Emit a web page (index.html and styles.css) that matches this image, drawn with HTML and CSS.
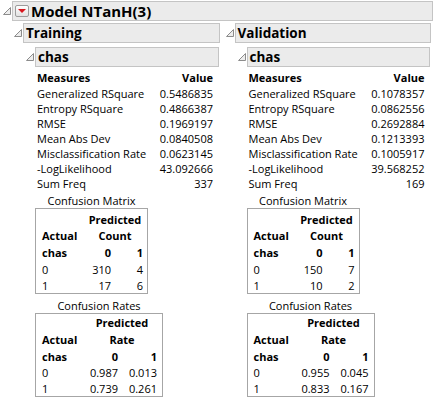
FILE: index.html
```html
<!DOCTYPE html>
<html lang="en">
<head>
  <meta charset="UTF-8" />
  <meta name="viewport" content="width=device-width, initial-scale=1.0" />
  <title>Model NTanH(3)</title>
  <link rel="stylesheet" href="styles.css">
</head>
<body>
  <div class="node top">
    <div class="head">
      <svg class="tri" viewBox="0 0 8 8"><polygon points="0.5,7.5 7.5,0.5 7.5,7.5" /></svg>
      <div class="title"><span class="menu"><span class="arrow"></span></span>Model NTanH(3)</div>
    </div>

    <div class="cols">
      <!-- Training -->
      <div class="node col">
        <div class="head">
          <svg class="tri" viewBox="0 0 8 8"><polygon points="0.5,7.5 7.5,0.5 7.5,7.5" /></svg>
          <div class="title">Training</div>
        </div>
        <div class="node sub">
          <div class="head">
            <svg class="tri" viewBox="0 0 8 8"><polygon points="0.5,7.5 7.5,0.5 7.5,7.5" /></svg>
            <div class="title">chas</div>
          </div>
          <div class="content">
            <table class="fit">
              <tr><th>Measures</th><th class="num">Value</th></tr>
              <tr><td>Generalized RSquare</td><td class="num">0.5486835</td></tr>
              <tr><td>Entropy RSquare</td><td class="num">0.4866387</td></tr>
              <tr><td>RMSE</td><td class="num">0.1969197</td></tr>
              <tr><td>Mean Abs Dev</td><td class="num">0.0840508</td></tr>
              <tr><td>Misclassification Rate</td><td class="num">0.0623145</td></tr>
              <tr><td>-LogLikelihood</td><td class="num">43.092666</td></tr>
              <tr><td>Sum Freq</td><td class="num">337</td></tr>
            </table>

            <div class="cm matrix">
              <div class="cap">Confusion Matrix</div>
              <div class="box">
                <table>
                  <tr class="r1"><td class="lab"></td><th colspan="2" class="mid">Predicted</th></tr>
                  <tr class="r2"><th class="lab">Actual</th><th colspan="2" class="mid">Count</th></tr>
                  <tr class="r3"><th class="lab">chas</th><th class="c0">0</th><th class="c1">1</th></tr>
                  <tr class="r4"><td class="lab">0</td><td class="c0">310</td><td class="c1">4</td></tr>
                  <tr class="r5"><td class="lab">1</td><td class="c0">17</td><td class="c1">6</td></tr>
                </table>
              </div>
            </div>

            <div class="cm rates">
              <div class="cap">Confusion Rates</div>
              <div class="box">
                <table>
                  <tr class="r1"><td class="lab"></td><th colspan="2" class="mid">Predicted</th></tr>
                  <tr class="r2"><th class="lab">Actual</th><th colspan="2" class="mid">Rate</th></tr>
                  <tr class="r3"><th class="lab">chas</th><th class="c0">0</th><th class="c1">1</th></tr>
                  <tr class="r4"><td class="lab">0</td><td class="c0">0.987</td><td class="c1">0.013</td></tr>
                  <tr class="r5"><td class="lab">1</td><td class="c0">0.739</td><td class="c1">0.261</td></tr>
                </table>
              </div>
            </div>
          </div>
        </div>
      </div>

      <!-- Validation -->
      <div class="node col">
        <div class="head">
          <svg class="tri" viewBox="0 0 8 8"><polygon points="0.5,7.5 7.5,0.5 7.5,7.5" /></svg>
          <div class="title">Validation</div>
        </div>
        <div class="node sub">
          <div class="head">
            <svg class="tri" viewBox="0 0 8 8"><polygon points="0.5,7.5 7.5,0.5 7.5,7.5" /></svg>
            <div class="title">chas</div>
          </div>
          <div class="content">
            <table class="fit">
              <tr><th>Measures</th><th class="num">Value</th></tr>
              <tr><td>Generalized RSquare</td><td class="num">0.1078357</td></tr>
              <tr><td>Entropy RSquare</td><td class="num">0.0862556</td></tr>
              <tr><td>RMSE</td><td class="num">0.2692884</td></tr>
              <tr><td>Mean Abs Dev</td><td class="num">0.1213393</td></tr>
              <tr><td>Misclassification Rate</td><td class="num">0.1005917</td></tr>
              <tr><td>-LogLikelihood</td><td class="num">39.568252</td></tr>
              <tr><td>Sum Freq</td><td class="num">169</td></tr>
            </table>

            <div class="cm matrix">
              <div class="cap">Confusion Matrix</div>
              <div class="box">
                <table>
                  <tr class="r1"><td class="lab"></td><th colspan="2" class="mid">Predicted</th></tr>
                  <tr class="r2"><th class="lab">Actual</th><th colspan="2" class="mid">Count</th></tr>
                  <tr class="r3"><th class="lab">chas</th><th class="c0">0</th><th class="c1">1</th></tr>
                  <tr class="r4"><td class="lab">0</td><td class="c0">150</td><td class="c1">7</td></tr>
                  <tr class="r5"><td class="lab">1</td><td class="c0">10</td><td class="c1">2</td></tr>
                </table>
              </div>
            </div>

            <div class="cm rates">
              <div class="cap">Confusion Rates</div>
              <div class="box">
                <table>
                  <tr class="r1"><td class="lab"></td><th colspan="2" class="mid">Predicted</th></tr>
                  <tr class="r2"><th class="lab">Actual</th><th colspan="2" class="mid">Rate</th></tr>
                  <tr class="r3"><th class="lab">chas</th><th class="c0">0</th><th class="c1">1</th></tr>
                  <tr class="r4"><td class="lab">0</td><td class="c0">0.955</td><td class="c1">0.045</td></tr>
                  <tr class="r5"><td class="lab">1</td><td class="c0">0.833</td><td class="c1">0.167</td></tr>
                </table>
              </div>
            </div>
          </div>
        </div>
      </div>
    </div>
  </div>
</body>
</html>
```

FILE: styles.css
```css
body {
  margin: 0;
  padding-top: 1px;
  background: #fff;
  color: #000;
  font-family: "Open Sans", "Segoe UI", sans-serif;
  font-size: 11px;
}

/* outline nodes */
.head {
  display: flex;
  align-items: center;
}
.tri {
  flex: none;
  width: 8px;
  height: 8px;
  margin: 0 1px;
}
.tri polygon {
  fill: #ededed;
  stroke: #8c8c8c;
  stroke-width: 1;
}
.title {
  flex: 1;
  display: flex;
  align-items: center;
  height: 18px;
  padding-left: 2px;
  border: 1px solid #c4c4c4;
  background: #ebebeb;
  font-size: 13.5px;
  font-weight: bold;
}
.top > .head {
  padding: 0 1px 0 2px;
}
.top > .head .title {
  font-size: 15px;
}
.menu {
  display: flex;
  align-items: center;
  justify-content: center;
  width: 12px;
  height: 10px;
  margin-right: 2px;
  border: 1px solid #9c9c9c;
  border-radius: 2px;
  background: linear-gradient(#fff, #e2e2e2);
}
.arrow {
  width: 0;
  height: 0;
  border-left: 4px solid transparent;
  border-right: 4px solid transparent;
  border-top: 4px solid #d9161e;
}

.cols {
  display: flex;
  gap: 5px;
  padding: 0 3px 0 13px;
}
.col {
  flex: 1;
  min-width: 0;
}
.col > .head {
  margin-top: 2px;
}
.sub {
  padding: 0 1px 0 12px;
}
.sub > .head {
  margin-top: 4px;
}
.content {
  display: flex;
  flex-direction: column;
  align-items: flex-start;
  padding-left: 10px;
}

/* measures table */
.fit {
  width: 176px;
  margin: 3px 0 0 2px;
  border-collapse: collapse;
}
.fit th,
.fit td {
  padding: 0;
  line-height: 15px;
  white-space: nowrap;
  text-align: left;
}
.fit th {
  padding-bottom: 1px;
}
.fit .num {
  text-align: right;
}

/* confusion tables */
.cm {
  display: flex;
  flex-direction: column;
  align-items: center;
}
.cap {
  line-height: 15px;
}
.box {
  border: 1px solid #a6a6a6;
}
.box table {
  border-collapse: collapse;
}
.box th,
.box td {
  padding: 0;
  white-space: nowrap;
  text-align: right;
}
.box .lab {
  width: 39px;
  text-align: left;
}
.box .mid {
  text-align: center;
  padding-left: 6px;
}
.r1 > *, .r4 > * { line-height: 16px; }
.r2 > * { line-height: 16px; }
.r3 > * { line-height: 18px; }
.r5 > * { line-height: 15px; }

.matrix {
  margin-top: 2px;
}
.matrix .box {
  padding: 3px 4px 0 6px;
}
.matrix .c0 { width: 30px; }
.matrix .c1 { width: 32px; }

.rates {
  margin-top: 4px;
}
.rates .box {
  padding: 1px 5px 0 6px;
}
.rates .r2 > *, .rates .r3 > * { line-height: 17px; }
.rates .c0 { width: 37px; }
.rates .c1 { width: 39px; }
```
